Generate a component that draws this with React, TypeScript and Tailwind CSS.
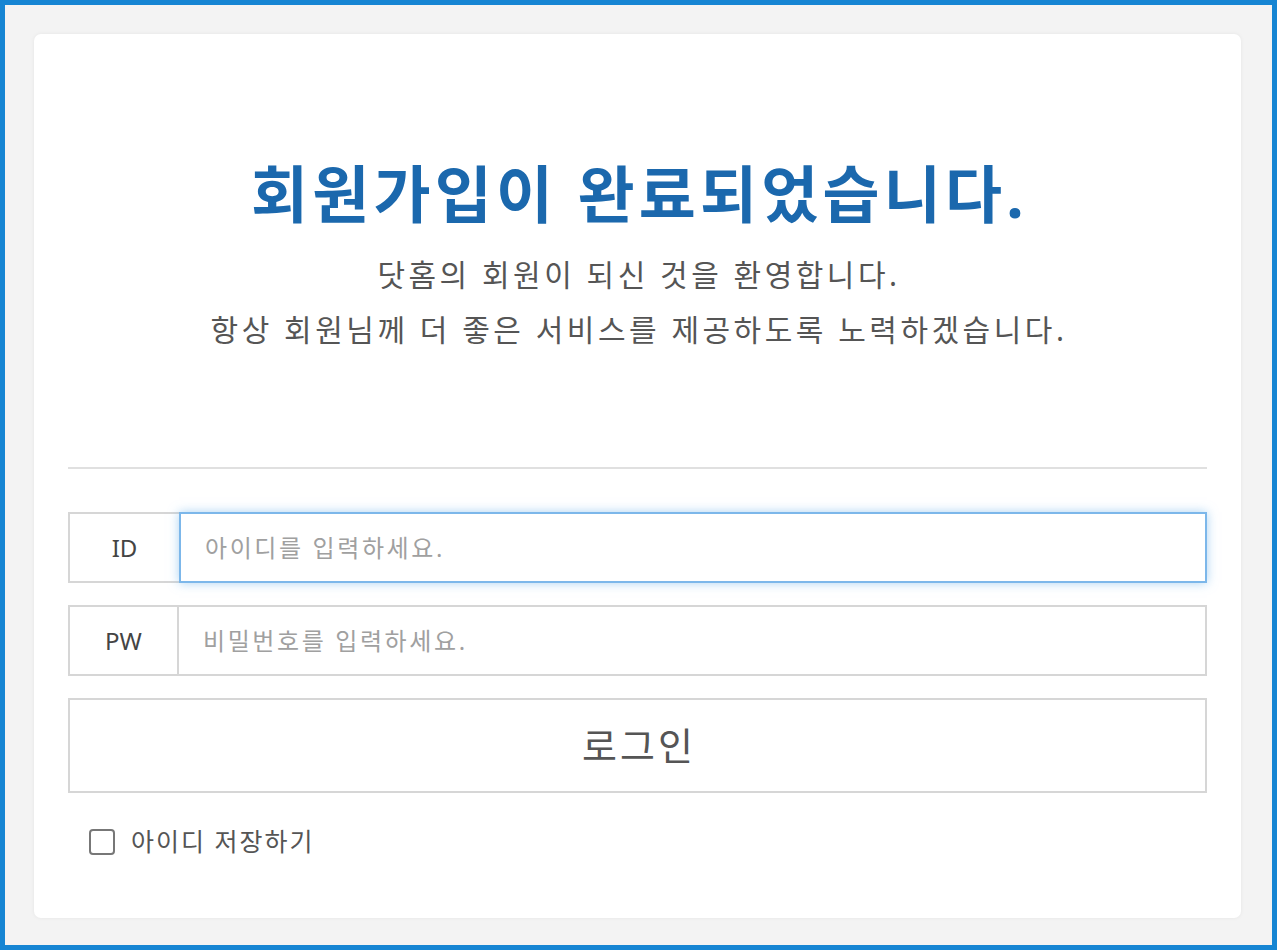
import React, { useState } from 'react'

const font = { fontFamily: '"Noto Sans", "Noto Sans CJK KR", sans-serif' }

function FieldRow({
  label,
  placeholder,
  type = 'text',
  focused = false,
}: {
  label: string
  placeholder: string
  type?: string
  focused?: boolean
}) {
  return (
    <div className="flex h-[71px]">
      <div
        className={
          focused
            ? 'flex w-[111px] shrink-0 items-center justify-center border-2 border-r-0 border-[#d6d6d6] text-[24px] text-[#444]'
            : 'flex w-[111px] shrink-0 items-center justify-center border-2 border-[#d6d6d6] text-[24px] text-[#444]'
        }
      >
        {label}
      </div>
      <input
        type={type}
        placeholder={placeholder}
        className={
          focused
            ? 'min-w-0 flex-1 border-2 border-[#7cb7ea] px-6 text-[24px] tracking-[2.6px] text-[#333] shadow-[0_0_10px_rgba(102,175,233,0.55)] outline-none placeholder:text-[#a0a0a0]'
            : 'min-w-0 flex-1 border-2 border-l-0 border-[#d6d6d6] px-6 text-[24px] tracking-[2.6px] text-[#333] outline-none placeholder:text-[#a0a0a0]'
        }
      />
    </div>
  )
}

export default function App() {
  const [saveId, setSaveId] = useState(false)

  return (
    <div
      className="box-border h-[950px] w-full border-[5px] border-[#1685d3] bg-[#f3f3f3] pb-[27px] pl-[29px] pr-[31px] pt-[29px]"
      style={font}
    >
      <div className="flex h-full flex-col rounded-[7px] bg-white px-[34px] pt-[126px] shadow-[0_0_4px_rgba(0,0,0,0.06)]">
        {/* completion message */}
        <h1 className="pl-[4px] text-center text-[62px] font-bold leading-[68px] tracking-[4.2px] text-[#1b68ad]">
          회원가입이 완료되었습니다.
        </h1>
        <p className="mt-[19px] pl-[3px] text-center text-[30px] leading-[55px] tracking-[3.5px] text-[#555]">
          닷홈의 회원이 되신 것을 환영합니다.
          <br />
          항상 회원님께 더 좋은 서비스를 제공하도록 노력하겠습니다.
        </p>

        <hr className="mt-[110px] border-t-2 border-[#e0e0e0]" />

        {/* login form */}
        <form className="mt-[43px] flex flex-col gap-[22px]" onSubmit={(e) => e.preventDefault()}>
          <FieldRow label="ID" placeholder="아이디를 입력하세요." focused />
          <FieldRow label="PW" placeholder="비밀번호를 입력하세요." type="password" />
          <button
            type="submit"
            className="h-[95px] border-2 border-[#d6d6d6] bg-white pl-[3px] text-[38px] tracking-[3px] text-[#555]"
          >
            로그인
          </button>
        </form>

        <label className="mt-[30px] flex items-center gap-[16px] pl-[21px] text-[25px] tracking-[2px] text-[#555]">
          <input
            type="checkbox"
            checked={saveId}
            onChange={(e) => setSaveId(e.target.checked)}
            className="h-[26px] w-[26px] appearance-none rounded-[4px] border-2 border-[#777] bg-white checked:bg-[#1685d3]"
          />
          아이디 저장하기
        </label>
      </div>
    </div>
  )
}
